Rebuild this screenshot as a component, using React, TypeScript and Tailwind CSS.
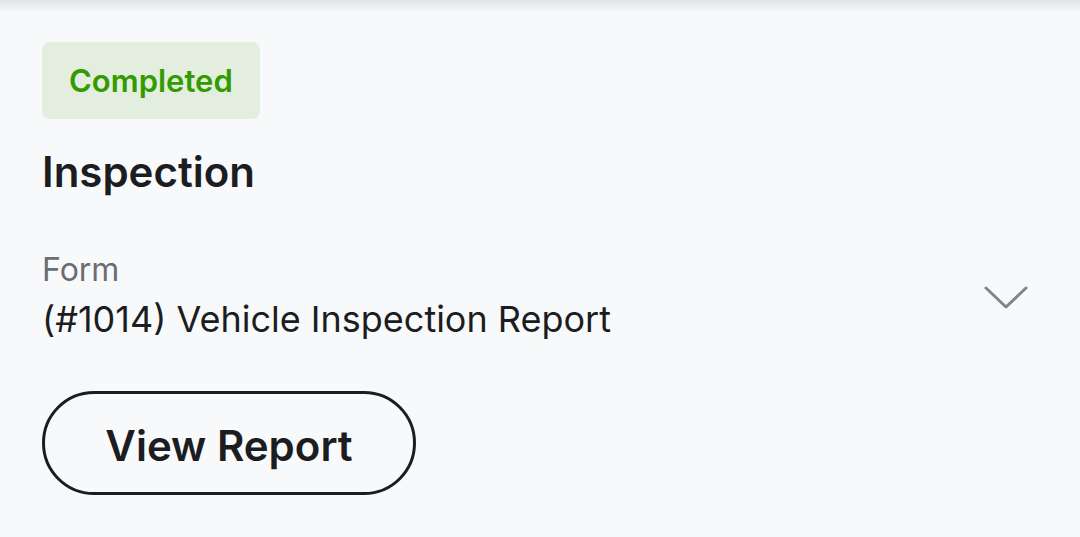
import React from "react";

const Chevron = () => (
  <svg width="44" height="24" viewBox="0 0 44 24" fill="none" className="text-[#80858c]">
    <path d="M2 2 L22 21 L42 2" stroke="currentColor" strokeWidth="3" strokeLinecap="round" strokeLinejoin="round" />
  </svg>
);

export default function App() {
  return (
    <div className="relative h-[537px] w-[1080px] overflow-hidden bg-[#f8f9fb] font-['Inter',sans-serif] text-[#1c1d20]">
      <div className="pointer-events-none absolute inset-x-0 top-0 h-3 bg-gradient-to-b from-[#e2e3e6] to-transparent" />
      <div className="flex flex-col px-[42px] pt-[42px]">
        <div className="flex">
          <span className="flex h-[77px] items-center rounded-lg bg-[#e3eede] px-[27px] text-[31px] font-semibold leading-[38px] text-[#339a00]">
            Completed
          </span>
        </div>
        <h2 className="mt-[28px] text-[42px] font-semibold leading-[50px]">Inspection</h2>
        <div className="mt-[53px] flex items-center justify-between">
          <div className="flex flex-col">
            <span className="text-[32px] leading-[40px] text-[#6b6d72]">Form</span>
            <span className="mt-[7px] text-[36px] leading-[44px]">(#1014) Vehicle Inspection Report</span>
          </div>
          <div className="mr-[10px] mt-[4px]">
            <Chevron />
          </div>
        </div>
        <div className="mt-[50px] flex">
          <button className="flex h-[104px] w-[374px] items-center justify-center rounded-full border-[3px] border-[#1c1d20] pt-[6px] text-[42px] font-semibold leading-[52px]">
            View Report
          </button>
        </div>
      </div>
    </div>
  );
}
